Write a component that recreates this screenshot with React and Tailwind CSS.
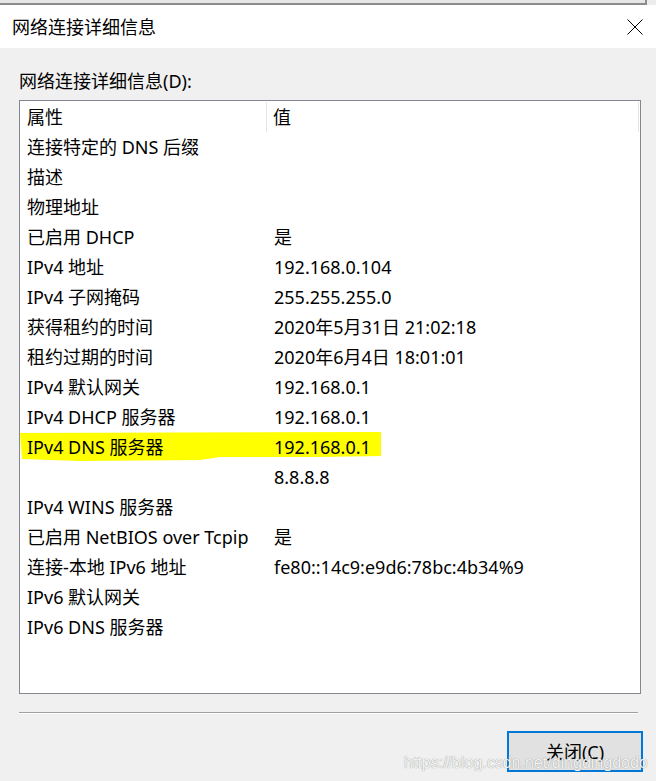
const rows = [
  ["连接特定的 DNS 后缀", ""],
  ["描述", ""],
  ["物理地址", ""],
  ["已启用 DHCP", "是"],
  ["IPv4 地址", "192.168.0.104"],
  ["IPv4 子网掩码", "255.255.255.0"],
  ["获得租约的时间", "2020年5月31日 21:02:18"],
  ["租约过期的时间", "2020年6月4日 18:01:01"],
  ["IPv4 默认网关", "192.168.0.1"],
  ["IPv4 DHCP 服务器", "192.168.0.1"],
  ["IPv4 DNS 服务器", "192.168.0.1", true],
  ["", "8.8.8.8"],
  ["IPv4 WINS 服务器", ""],
  ["已启用 NetBIOS over Tcpip", "是"],
  ["连接-本地 IPv6 地址", "fe80::14c9:e9d6:78bc:4b34%9"],
  ["IPv6 默认网关", ""],
  ["IPv6 DNS 服务器", ""],
];

function Marker() {
  // yellow highlighter stroke drawn over the row
  return (
    <svg
      className="absolute left-0 top-0"
      width="362"
      height="31"
      viewBox="0 0 362 31"
    >
      <path
        d="M0 1 L361 0 L361 24 L300 25 L200 25 L180 28 L60 29 L2 27 Z"
        fill="#ffff00"
      />
    </svg>
  );
}

function Row({ name, value, marked }) {
  return (
    <div className="relative flex h-[30px] items-center">
      {marked && <Marker />}
      <div className="relative w-[248px] pl-[7px] whitespace-nowrap">{name}</div>
      <div className="relative pl-[6px] whitespace-nowrap">{value}</div>
    </div>
  );
}

export default function App() {
  return (
    <div
      className="relative flex h-[781px] w-[656px] flex-col overflow-hidden bg-[#f0f0f0] text-[18px] leading-[24px] text-black"
      style={{ fontFamily: '"Noto Sans", "Noto Sans CJK SC", sans-serif' }}
    >
      {/* window behind */}
      <div className="flex h-[5px]">
        <div className="flex-1 border-b-2 border-[#8c8c8c] bg-[#e6e6e6]" />
        <div className="w-[2px] bg-[#8c8c8c]" />
        <div className="w-[9px] bg-[#ececec]" />
      </div>

      {/* title bar */}
      <div className="flex h-[43px] items-center justify-between bg-white pl-[12px] pr-[13px]">
        <span>网络连接详细信息</span>
        <svg width="16" height="16" viewBox="0 0 16 16">
          <path d="M0.5 0.5 L15.5 15.5 M15.5 0.5 L0.5 15.5" stroke="#000" strokeWidth="1" />
        </svg>
      </div>

      {/* body */}
      <div className="flex flex-1 flex-col pl-[19px] pr-[15px]">
        <div className="mt-[21px] h-[24px]">网络连接详细信息(D):</div>

        <div className="mt-[7px] h-[594px] border border-[#828790] bg-white">
          <div className="flex h-[31px] items-center pt-[1px]">
            <div className="w-[247px] self-stretch border-r border-[#e5e5e5] pl-[7px] leading-[30px]">属性</div>
            <div className="flex-1 self-stretch border-r border-[#e5e5e5] pl-[6px] leading-[30px]">值</div>
            <div className="w-[1px]" />
          </div>
          {rows.map(([name, value, marked], i) => (
            <Row key={i} name={name} value={value} marked={marked} />
          ))}
        </div>

        <div className="mt-[18px] w-[619px] border-t border-b border-t-[#a0a0a0] border-b-white" />

        <div className="mt-[17px] flex justify-end pr-[-2px]">
          <button className="mr-[-2px] h-[41px] w-[136px] border-2 border-[#0078d7] bg-[#e1e1e1]">
            关闭(C)
          </button>
        </div>
      </div>

      {/* watermark */}
      <div
        className="absolute left-[404px] top-[751px] text-[16px] text-[#f4f4f4] [text-shadow:0_0_1px_#7a7a7a]"
        style={{ fontFamily: '"Liberation Sans", sans-serif' }}
      >
        https://blog.csdn.net/dingdingdodo
      </div>
    </div>
  );
}
